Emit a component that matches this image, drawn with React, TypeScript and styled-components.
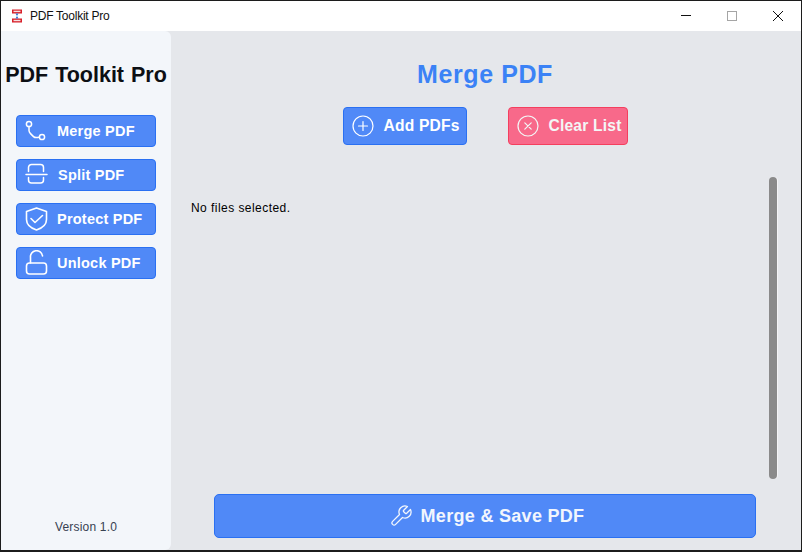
import React from "react";
import styled, { createGlobalStyle } from "styled-components";

const Global = createGlobalStyle`
  html, body { margin: 0; padding: 0; background: #fff; }
  * { box-sizing: border-box; }
  body { font-family: "Liberation Sans", Arial, sans-serif; }
`;

const Win = styled.div`
  width: 802px;
  height: 552px;
  border: 1px solid #1c1c1c;
  border-bottom-width: 2px;
  display: flex;
  flex-direction: column;
  background: #e5e7eb;
  overflow: hidden;
`;

const TitleBar = styled.header`
  height: 30px;
  flex: none;
  background: #fff;
  display: flex;
  align-items: center;
  padding-left: 10px;
`;

const AppName = styled.span`
  font-size: 12px;
  color: #111;
  margin-left: 7px;
  flex: 1;
  letter-spacing: -0.25px;
`;

const WinCtl = styled.span`
  width: 46px;
  height: 30px;
  display: flex;
  align-items: center;
  justify-content: center;
`;

const Body = styled.div`
  flex: 1;
  display: flex;
  min-height: 0;
`;

const Sidebar = styled.aside`
  width: 170px;
  flex: none;
  background: #f3f6fa;
  border-radius: 0 6px 6px 0;
  display: flex;
  flex-direction: column;
  align-items: center;
  padding: 30px 0 16px;
`;

const Brand = styled.h1`
  margin: 0 0 26px;
  font-size: 21.5px;
  line-height: 28px;
  font-weight: 700;
  color: #0c0f14;
  white-space: nowrap;
  word-spacing: 1px;
`;

const Nav = styled.nav`
  display: flex;
  flex-direction: column;
  gap: 12px;
`;

const NavButton = styled.button`
  width: 140px;
  height: 32px;
  background: #5089f7;
  border: 1px solid #2a70f2;
  border-radius: 4px;
  color: #fff;
  font: 700 14.5px "Liberation Sans", sans-serif;
  letter-spacing: 0.22px;
  display: grid;
  grid-template-columns: 35px 1fr;
  align-items: center;
  padding: 0 0 0 5px;
  text-align: left;
  svg { display: block; margin-left: 2px; }
`;

const NavLabel = styled.span<{ $shift?: number }>`
  padding-left: ${(p) => p.$shift ?? 0}px;
  white-space: nowrap;
`;

const Version = styled.div`
  margin-top: auto;
  font-size: 12px;
  line-height: 14px;
  color: #374151;
  letter-spacing: 0.2px;
`;

const Main = styled.main`
  flex: 1;
  min-width: 0;
  display: flex;
  flex-direction: column;
  padding: 28px 24px 12px 20px;
`;

const Heading = styled.h2`
  margin: 0 0 18px;
  text-align: center;
  padding-left: 2px;
  font-size: 25px;
  line-height: 30px;
  font-weight: 700;
  color: #3b82f6;
  letter-spacing: 0.6px;
`;

const Actions = styled.div`
  display: flex;
  justify-content: center;
  gap: 41px;
  padding-left: 2px;
`;

const ActionButton = styled.button<{ $tone: "blue" | "pink"; $w: number }>`
  width: ${(p) => p.$w}px;
  height: 38px;
  background: ${(p) => (p.$tone === "blue" ? "#5089f7" : "#f8698a")};
  border: 1px solid ${(p) => (p.$tone === "blue" ? "#2a70f2" : "#f43f5e")};
  border-radius: 4px;
  color: ${(p) => (p.$tone === "blue" ? "#fff" : "#f3f6f6")};
  font: 700 15.6px "Liberation Sans", sans-serif;
  letter-spacing: 0.2px;
  display: flex;
  align-items: center;
  gap: 9px;
  padding: 0 0 0 7px;
  white-space: nowrap;
`;

const ListArea = styled.section`
  flex: 1;
  min-height: 0;
  display: flex;
  justify-content: space-between;
  padding-top: 32px;
  padding-bottom: 15px;
`;

const Empty = styled.p`
  margin: 24px 0 0;
  font-size: 12px;
  line-height: 14px;
  color: #000;
  letter-spacing: 0.45px;
`;

const ScrollThumb = styled.div`
  width: 8px;
  background: #8a8a8a;
  border-radius: 4px;
  box-shadow: 1px 0 0 #f4f4f6;
`;

const SaveButton = styled.button`
  align-self: flex-start;
  margin-left: 23px;
  width: 542px;
  height: 44px;
  background: #5089f7;
  border: 1px solid #2a70f2;
  border-radius: 5px;
  color: #f2f6fd;
  font: 700 18px "Liberation Sans", sans-serif;
  letter-spacing: 0.3px;
  display: flex;
  align-items: center;
  justify-content: center;
  gap: 8px;
  padding: 0 0 0 3px;
`;

const s = { fill: "none", stroke: "currentColor", strokeLinecap: "round", strokeLinejoin: "round" } as const;

const MergeIcon = () => (
  <svg width="26" height="26" viewBox="0 0 26 26" {...s} strokeWidth="1.5">
    <circle cx="5" cy="6" r="2.600" />
    <circle cx="18" cy="19" r="2.600" />
    <path d="M5 8.600v4c0 1 .5 2 1.500 3l3 3c1 1 2.500 1.500 5.900.500" />
  </svg>
);
const SplitIcon = () => (
  <svg width="26" height="26" viewBox="0 0 26 26" {...s} strokeWidth="1.5">
    <path d="M2 12.500h21M4.500 9.500V5.500a3 3 0 0 1 3-3h9a3 3 0 0 1 3 3v4M4.500 15.500V18a3 3 0 0 0 3 3h9a3 3 0 0 0 3-3v-2.500" />
  </svg>
);
const ShieldIcon = () => (
  <svg width="26" height="26" viewBox="0 0 26 26" {...s} strokeWidth="1.6">
    <path d="M12.500 2l10 3.500v8c0 5-4 8.500-10 10.500-6-2-10-5.500-10-10.500v-8z" />
    <path d="M7 12.500l4 4 7.500-7" />
  </svg>
);
const LockIcon = () => (
  <svg width="26" height="26" viewBox="0 0 26 26" {...s} strokeWidth="1.6">
    <rect x="2.500" y="13" width="20" height="11" rx="3" />
    <path d="M6.500 13V7.500a6 6 0 0 1 12-1.500" />
  </svg>
);
const PlusIcon = () => (
  <svg width="24" height="24" viewBox="0 0 24 24" {...s} strokeWidth="1.2">
    <circle cx="12" cy="12" r="10" />
    <path d="M12 7.500v9M7.500 12h9" />
  </svg>
);
const CrossIcon = () => (
  <svg width="24" height="24" viewBox="0 0 24 24" {...s} strokeWidth="1.2">
    <circle cx="12" cy="12" r="10" />
    <path d="M8.800 8.800l6.400 6.400M15.200 8.800l-6.400 6.400" />
  </svg>
);
const WrenchIcon = () => (
  <svg width="24" height="24" viewBox="0 0 24 24" {...s} strokeWidth="1.3">
    <path d="M14.700 6.300a1 1 0 0 0 0 1.400l1.600 1.600a1 1 0 0 0 1.400 0l3.770-3.770a6 6 0 0 1-7.940 7.940l-6.910 6.910a2.120 2.120 0 0 1-3-3l6.910-6.910a6 6 0 0 1 7.940-7.940l-3.760 3.760z" />
  </svg>
);

const Logo = () => (
  <svg width="12" height="14" viewBox="0 0 12 14">
    <rect x="1" y="0.500" width="10" height="4" fill="#d8202a" />
    <rect x="1" y="9.500" width="10" height="4" fill="#d8202a" />
    <rect x="2.500" y="1.700" width="7" height="1.400" fill="#f6dfe0" />
    <rect x="2.500" y="10.800" width="7" height="1.400" fill="#f6dfe0" />
    <path d="M4.500 4.500h3L6 7l1.500 2.500h-3L6 7z" fill="#2f6fd0" />
  </svg>
);

const navItems = [
  { label: "Merge PDF", icon: <MergeIcon />, shift: 0 },
  { label: "Split PDF", icon: <SplitIcon />, shift: 1 },
  { label: "Protect PDF", icon: <ShieldIcon />, shift: 0 },
  { label: "Unlock PDF", icon: <LockIcon />, shift: 0 },
];

export default function App() {
  return (
    <Win>
      <Global />
      <TitleBar>
        <Logo />
        <AppName>PDF Toolkit Pro</AppName>
        <WinCtl>
          <svg width="12" height="12" viewBox="0 0 12 12"><path d="M1 5.500h10" stroke="#111" /></svg>
        </WinCtl>
        <WinCtl>
          <svg width="12" height="12" viewBox="0 0 12 12"><rect x="1.500" y="1.500" width="9" height="9" fill="none" stroke="#a5a5a5" /></svg>
        </WinCtl>
        <WinCtl>
          <svg width="12" height="12" viewBox="0 0 12 12"><path d="M1 1l10 10M11 1L1 11" stroke="#111" /></svg>
        </WinCtl>
      </TitleBar>
      <Body>
        <Sidebar>
          <Brand>PDF Toolkit Pro</Brand>
          <Nav>
            {navItems.map((n) => (
              <NavButton key={n.label}>
                {n.icon}
                <NavLabel $shift={n.shift}>{n.label}</NavLabel>
              </NavButton>
            ))}
          </Nav>
          <Version>Version 1.0</Version>
        </Sidebar>
        <Main>
          <Heading>Merge PDF</Heading>
          <Actions>
            <ActionButton $tone="blue" $w={124}><PlusIcon />Add PDFs</ActionButton>
            <ActionButton $tone="pink" $w={120}><CrossIcon />Clear List</ActionButton>
          </Actions>
          <ListArea>
            <Empty>No files selected.</Empty>
            <ScrollThumb />
          </ListArea>
          <SaveButton><WrenchIcon />Merge &amp; Save PDF</SaveButton>
        </Main>
      </Body>
    </Win>
  );
}
